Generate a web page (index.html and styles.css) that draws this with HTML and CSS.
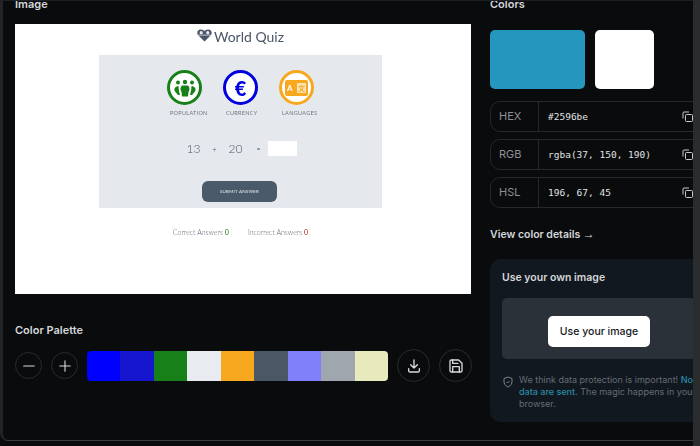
FILE: index.html
```html
<!DOCTYPE html>
<html lang="en">
<head>
    <meta charset="UTF-8">
    <title>Image Color Picker</title>
    <link rel="stylesheet" href="styles.css">
</head>
<body>

    <div class="shell">
        <div class="panel">

            <section class="left-col">
                <h2 class="heading">Image</h2>

                <div class="shot">
                    <div class="quiz-title">
                        <svg class="quiz-logo" viewBox="0 0 16 14" width="15" height="14">
                            <path d="M8 14 L1 7 C-0.5 4.500 0.500 1 4 1 C6 1 7.400 1.800 8 3 C8.600 1.800 10 1 12 1 C15.500 1 16.500 4.500 15 7 Z" fill="#4a5568"/>
                            <circle cx="4.500" cy="4.500" r="1.700" fill="#e8ecf0"/>
                            <circle cx="11.500" cy="4.500" r="1.700" fill="#e8ecf0"/>
                            <rect x="1" y="6.700" width="14" height="0.800" fill="#e8ecf0"/>
                        </svg>
                        <span>World Quiz</span>
                    </div>

                    <div class="quiz-box">
                        <div class="topics">
                            <div class="topic">
                                <div class="topic-icon green">
                                    <svg viewBox="0 0 26 26" width="26" height="26">
                                        <circle cx="6" cy="7.500" r="2" fill="#188018"/>
                                        <circle cx="13" cy="7" r="2.200" fill="#188018"/>
                                        <circle cx="20" cy="7.500" r="2" fill="#188018"/>
                                        <path d="M6.500 11 C3 11.500 1.500 14 3 16.500 L6 20 L8 20 C7 17 6.500 14 6.500 11 Z" fill="#188018"/>
                                        <path d="M19.500 11 C23 11.500 24.500 14 23 16.500 L20 20 L18 20 C19 17 19.500 14 19.500 11 Z" fill="#188018"/>
                                        <path d="M10 10.500 L16 10.500 C17.800 12 18 15 16.500 17 L16 21.500 L10 21.500 L9.500 17 C8 15 8.200 12 10 10.500 Z" fill="#188018"/>
                                    </svg>
                                </div>
                                <span class="topic-label">POPULATION</span>
                            </div>
                            <div class="topic">
                                <div class="topic-icon blue"><span class="euro">€</span></div>
                                <span class="topic-label">CURRENCY</span>
                            </div>
                            <div class="topic">
                                <div class="topic-icon orange">
                                    <div class="lang-card">
                                        <span class="lang-a">A</span>
                                        <span class="lang-z">文</span>
                                    </div>
                                </div>
                                <span class="topic-label">LANGUAGES</span>
                            </div>
                        </div>

                        <div class="sum">
                            <span class="num">13</span>
                            <span class="op">+</span>
                            <span class="num">20</span>
                            <span class="op">=</span>
                            <span class="answer"></span>
                        </div>

                        <div class="submit">SUBMIT ANSWER</div>
                    </div>

                    <div class="score">
                        <span>Correct Answers <b class="good">0</b></span>
                        <span>Incorrect Answers <b class="bad">0</b></span>
                    </div>
                </div>

                <h2 class="heading palette-heading">Color Palette</h2>

                <div class="palette-row">
                    <button class="round small">
                        <svg viewBox="0 0 24 24" width="18" height="18"><path d="M5 12h14"/></svg>
                    </button>
                    <button class="round small">
                        <svg viewBox="0 0 24 24" width="18" height="18"><path d="M5 12h14M12 5v14"/></svg>
                    </button>
                    <div class="palette">
                        <span style="background:#0000ff"></span>
                        <span style="background:#1616cf"></span>
                        <span style="background:#188018"></span>
                        <span style="background:#e8ecf0"></span>
                        <span style="background:#f8a81f"></span>
                        <span style="background:#4a5866"></span>
                        <span style="background:#8080fb"></span>
                        <span style="background:#a0a6ae"></span>
                        <span style="background:#e6eabd"></span>
                    </div>
                    <button class="round big download">
                        <svg viewBox="0 0 24 24" width="16" height="16"><path d="M4 16v3a2 2 0 0 0 2 2h12a2 2 0 0 0 2-2v-3M7 10l5 5 5-5M12 15V3"/></svg>
                    </button>
                    <button class="round big">
                        <svg viewBox="0 0 24 24" width="16" height="16"><path d="M19 21H5a2 2 0 0 1-2-2V5a2 2 0 0 1 2-2h11l5 5v11a2 2 0 0 1-2 2z"/><path d="M17 21v-8H7v8M7 3v5h8"/></svg>
                    </button>
                </div>
            </section>

            <section class="right-col">
                <h2 class="heading">Colors</h2>

                <div class="swatches">
                    <div class="swatch picked"></div>
                    <div class="swatch hover"></div>
                </div>

                <div class="values">
                    <div class="value-row">
                        <span class="value-name">HEX</span>
                        <span class="value-text">#2596be</span>
                        <svg class="copy" viewBox="0 0 12 12" width="12" height="12"><rect x="3.500" y="3.500" width="7" height="7" rx="1"/><path d="M1 7.500V2a1 1 0 0 1 1-1h5"/></svg>
                    </div>
                    <div class="value-row">
                        <span class="value-name">RGB</span>
                        <span class="value-text">rgba(37, 150, 190)</span>
                        <svg class="copy" viewBox="0 0 12 12" width="12" height="12"><rect x="3.500" y="3.500" width="7" height="7" rx="1"/><path d="M1 7.500V2a1 1 0 0 1 1-1h5"/></svg>
                    </div>
                    <div class="value-row">
                        <span class="value-name">HSL</span>
                        <span class="value-text">196, 67, 45</span>
                        <svg class="copy" viewBox="0 0 12 12" width="12" height="12"><rect x="3.500" y="3.500" width="7" height="7" rx="1"/><path d="M1 7.500V2a1 1 0 0 1 1-1h5"/></svg>
                    </div>
                </div>

                <a class="details" href="#">View color details <span class="arrow">→</span></a>

                <div class="own-card">
                    <h3 class="own-title">Use your own image</h3>
                    <div class="drop">
                        <button class="use-btn">Use your image</button>
                    </div>
                    <div class="notice">
                        <svg class="shield" viewBox="0 0 24 24" width="12" height="12"><path d="M12 22s8-3 8-10V5l-8-3-8 3v7c0 7 8 10 8 10z"/><path d="M9 12l2 2 4-4"/></svg>
                        <p>We think data protection is important! <b>No data are sent.</b> The magic happens in your browser.</p>
                    </div>
                </div>
            </section>

        </div>
        <div class="scrollbar"></div>
    </div>

</body>
</html>
```

FILE: styles.css
```css
* {
    box-sizing: border-box;
}
html, body {
    height: 100%;
    margin: 0;
    overflow: hidden;
}
body {
    background-color: #0a0b0d;
    font-family: Inter, "Liberation Sans", sans-serif;
    color: #d4d6d9;
}
.shell {
    display: flex;
    height: 446px;
}
.panel {
    width: 693px;
    height: 441px;
    flex: none;
    display: flex;
    gap: 19px;
    padding-left: 12px;
    overflow: hidden;
    background-color: #0a0b0d;
    border-top: 1px solid #1c2026;
    border-bottom: 1px solid #3b3d40;
    border-left: 3px solid #232427;
    border-bottom-left-radius: 8px;
}
.scrollbar {
    width: 7px;
    background-color: #2b2c2e;
}
.heading {
    margin: -5px 0 0;
    font-size: 11px;
    line-height: 16px;
    font-weight: 600;
    color: #d4d6d9;
}

/* coluna esquerda */
.left-col {
    width: 456px;
    flex: none;
}
.shot {
    height: 270px;
    margin-top: 12px;
    padding-top: 4px;
    background-color: #ffffff;
    font-family: Lato, sans-serif;
    color: #4a5568;
    filter: blur(0.3px);
}
.quiz-title {
    display: flex;
    justify-content: center;
    align-items: center;
    gap: 2px;
    height: 17px;
    padding-right: 5px;
    font-size: 14px;
    font-weight: 400;
}
.quiz-logo {
    margin-top: -3px;
}
.quiz-box {
    width: 283px;
    height: 153px;
    margin: 10px 0 0 84px;
    padding-top: 15px;
    background-color: #e5e9ed;
}
.topics {
    display: flex;
    gap: 18px;
    padding-left: 68px;
}
.topic {
    width: 38px;
    display: flex;
    flex-direction: column;
}
.topic-icon {
    width: 35px;
    height: 35px;
    display: flex;
    align-items: center;
    justify-content: center;
    background-color: #ffffff;
    border-radius: 50%;
    border: 3.500px solid;
}
.topic-icon.green {
    border-color: #188018;
}
.topic-icon.blue {
    border-color: #0000e0;
}
.topic-icon.orange {
    border-color: #f8a81f;
}
.euro {
    font-size: 20px;
    font-weight: 900;
    color: #0000e0;
}
.lang-card {
    width: 23px;
    height: 16px;
    display: flex;
    align-items: center;
    justify-content: space-around;
    background-color: #f8a81f;
    border-radius: 2px;
    color: #ffffff;
    font-size: 8px;
    font-weight: 700;
}
.lang-z {
    width: 9px;
    height: 10px;
    background-color: #fbe0b0;
    color: #f8a81f;
    font-family: "Noto Sans CJK SC", sans-serif;
    font-size: 7px;
    line-height: 10px;
    text-align: center;
}
.topic-label {
    margin-top: 5px;
    padding-left: 3px;
    font-size: 5.500px;
    line-height: 7px;
    letter-spacing: 0.300px;
    white-space: nowrap;
    color: #6a7480;
}
.sum {
    display: flex;
    align-items: center;
    height: 15px;
    margin-top: 24px;
    padding-left: 84px;
    font-size: 12px;
    font-weight: 300;
}
.num {
    width: 21px;
    text-align: center;
}
.op {
    width: 15px;
    font-size: 7px;
    text-align: center;
}
.sum .op:nth-child(2) {
    margin: 0 3px;
}
.sum .op:nth-child(4) {
    margin: 0 2px 0 5px;
}
.answer {
    width: 29px;
    height: 15px;
    background-color: #ffffff;
}
.submit {
    width: 75px;
    height: 21px;
    margin: 25px 0 0 103px;
    background-color: #4a5a6b;
    border-radius: 6px;
    color: #e5e9ed;
    font-size: 4.500px;
    letter-spacing: 0.200px;
    line-height: 21px;
    text-align: center;
}
.score {
    display: flex;
    justify-content: center;
    gap: 19px;
    margin-top: 20px;
    padding-right: 5px;
    font-size: 7px;
    font-weight: 300;
    line-height: 9px;
    color: #5b6672;
}
.good {
    color: #188018;
}
.bad {
    color: #c02020;
}
.palette-heading {
    margin-top: 28px;
}
.palette-row {
    display: flex;
    align-items: center;
    margin-top: 11px;
}
.round {
    display: flex;
    align-items: center;
    justify-content: center;
    padding: 0;
    background: none;
    border: 1px solid #2a2c30;
    border-radius: 50%;
    flex: none;
}
.round svg {
    fill: none;
    stroke: #d8dadd;
    stroke-width: 2;
    stroke-linecap: round;
    stroke-linejoin: round;
}
.round.small {
    width: 27px;
    height: 27px;
    margin-right: 9px;
}
.round.big {
    width: 33px;
    height: 33px;
    margin-left: 9px;
}
.round.small svg {
    stroke-width: 1.500;
}
.palette {
    width: 301px;
    height: 30px;
    display: flex;
    flex: none;
    overflow: hidden;
    border-radius: 4px;
}
.palette span {
    flex: 1;
}

/* coluna direita */
.right-col {
    width: 218px;
    flex: none;
}
.swatches {
    display: flex;
    gap: 10px;
    margin-top: 18px;
}
.swatch {
    height: 59px;
    border-radius: 5px;
}
.swatch.picked {
    width: 95px;
    background-color: #2596be;
}
.swatch.hover {
    width: 59px;
    background-color: #ffffff;
}
.values {
    display: flex;
    flex-direction: column;
    gap: 7px;
    margin-top: 12px;
}
.value-row {
    display: flex;
    align-items: center;
    height: 31px;
    border: 1px solid #25282c;
    border-radius: 10px;
    font-size: 11px;
}
.value-name {
    width: 48px;
    height: 100%;
    flex: none;
    padding-left: 8px;
    border-right: 1px solid #25282c;
    line-height: 29px;
    color: #8d9196;
}
.value-text {
    flex: 1;
    padding-left: 9px;
    font-family: "DejaVu Sans Mono", "Liberation Mono", monospace;
    font-size: 9.500px;
    color: #e0e2e4;
}
.copy {
    margin-right: 13px;
    fill: none;
    stroke: #c8cacd;
    stroke-width: 1;
}
.details {
    display: block;
    margin-top: 19px;
    font-size: 10.500px;
    line-height: 14px;
    font-weight: 600;
    color: #d4d6d9;
    text-decoration: none;
}
.arrow {
    font-family: "Liberation Sans", sans-serif;
    font-size: 12px;
}
.own-card {
    height: 163px;
    margin-top: 17px;
    padding: 12px;
    background-color: #12181f;
    border-radius: 10px;
}
.own-title {
    margin: 0;
    font-size: 10.500px;
    line-height: 14px;
    font-weight: 600;
    color: #d4d6d9;
}
.drop {
    height: 61px;
    display: flex;
    align-items: center;
    justify-content: center;
    margin-top: 13px;
    background-color: #2b3138;
    border-radius: 5px;
}
.use-btn {
    width: 102px;
    height: 31px;
    margin-top: 6px;
    padding: 0;
    background-color: #ffffff;
    border: none;
    border-radius: 5px;
    font-family: Inter, sans-serif;
    font-size: 10.500px;
    font-weight: 500;
    color: #16181b;
}
.notice {
    display: flex;
    gap: 5px;
    margin: 15px -8px 0 0;
    font-size: 9px;
    line-height: 12px;
    color: #646c76;
}
.notice p {
    margin: 0;
}
.notice b {
    font-weight: 500;
    color: #2a8ba8;
}
.shield {
    flex: none;
    margin-top: 2px;
    fill: none;
    stroke: #7b8289;
    stroke-width: 2;
}
```
